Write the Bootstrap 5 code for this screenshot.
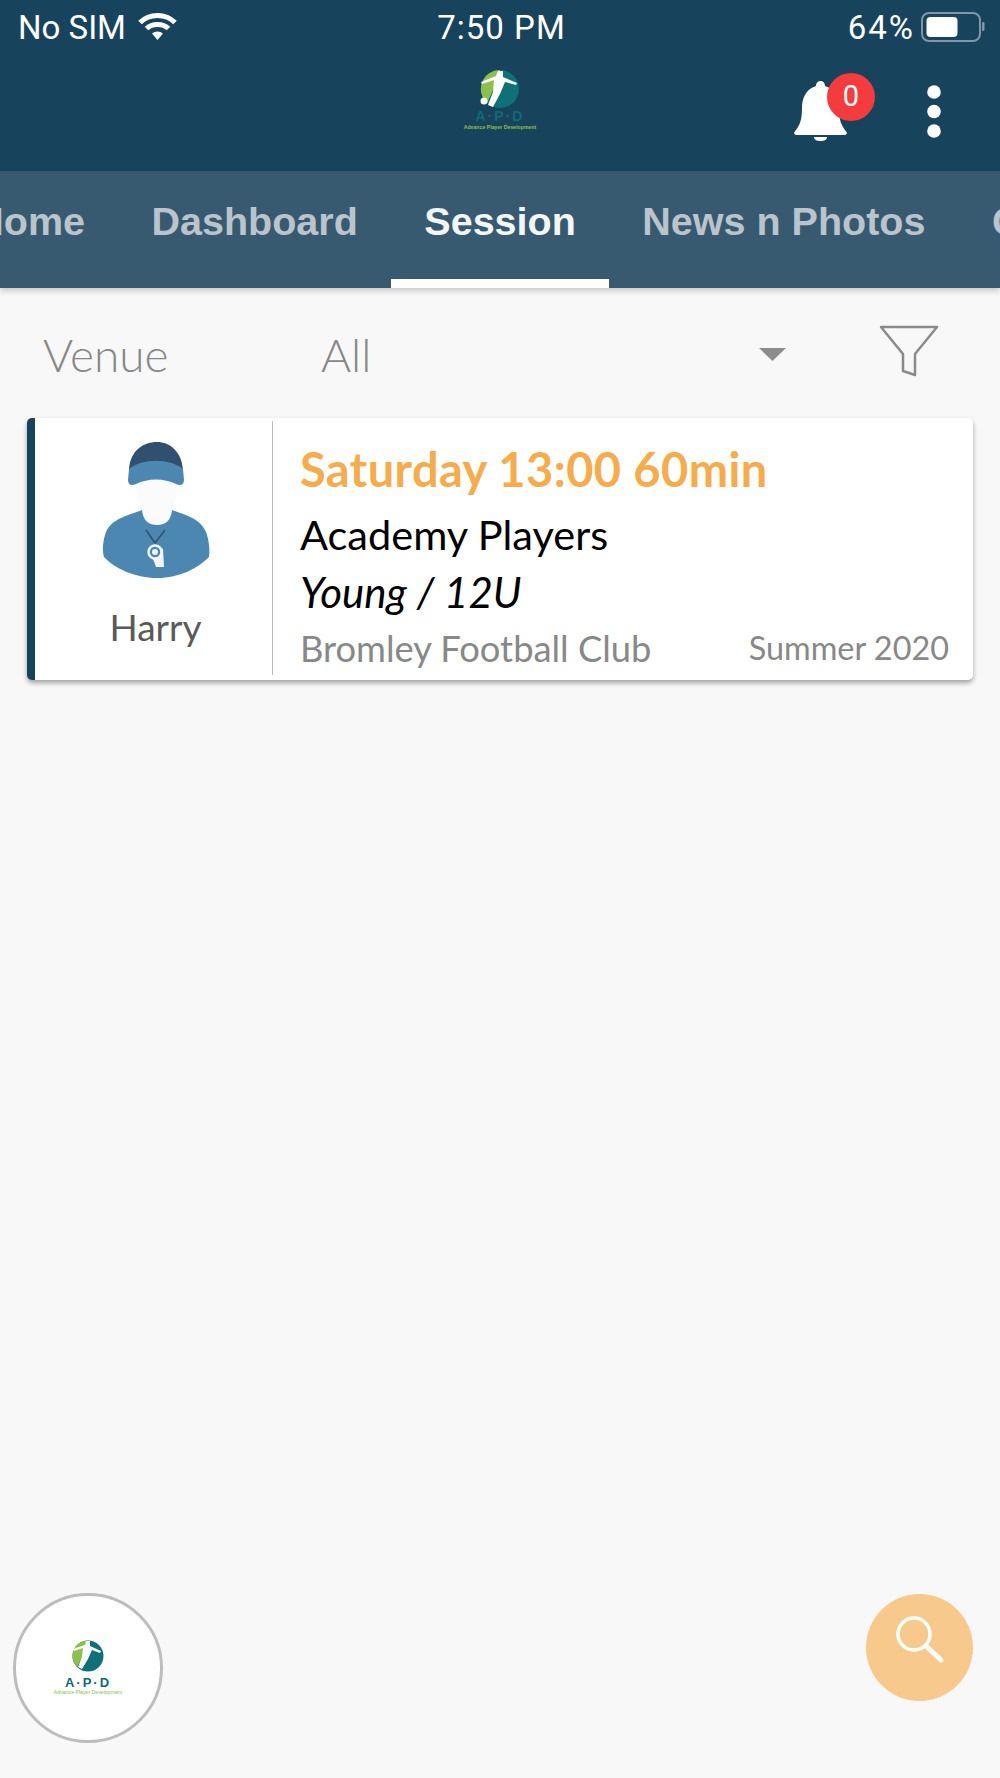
<!DOCTYPE html>
<html lang="en">
<head>
  <meta charset="UTF-8">
  <meta name="viewport" content="width=device-width, initial-scale=1.0">
  <title>Session</title>
  <link href="https://cdn.jsdelivr.net/npm/bootstrap@5.3.3/dist/css/bootstrap.min.css" rel="stylesheet">
  <style>
    body { background: #f8f8f8; width: 1000px; height: 1778px; overflow: hidden; font-family: Lato, "Liberation Sans", sans-serif; }
    .top-head { background: #18435c; height: 171px; color: #fff; }
    .status-line { height: 54px; padding: 1px 15px 0 18px; font: 33px/54px Roboto, "Liberation Sans", sans-serif; }
    .status-side { width: 300px; }
    .status-clock { letter-spacing: 1px; }
    .status-pct { letter-spacing: 2px; }
    .wifi-ico { width: 41px; height: 28px; margin: 0 0 4px 11px; }
    .batt-ico { width: 64px; height: 30px; margin-left: 6px; margin-bottom: 2px; }
    .brand-line { height: 116px; }
    .brand-side { flex: 1 1 0; }
    .brand-logo { width: 80px; height: 76px; margin-top: 16px; }
    .bell-wrap { width: 53px; height: 61px; margin: 26px 0 0 0; }
    .bell-count { position: absolute; left: 33px; top: -7px; width: 48px; height: 48px; border-radius: 50%; background: #f43b3e; font: 29px/46px Roboto, sans-serif; text-align: center; color: #fff; }
    .more-ico { width: 14px; height: 53px; margin: 31px 59px 0 80px; }
    .tab-strip { background: #375a70; height: 117px; overflow: hidden; box-shadow: 0 3px 6px rgba(0,0,0,.2); position: relative; }
    .tab-track { margin-left: -58px; white-space: nowrap; }
    .tab-item { height: 117px; padding: 0 33.25px; font: bold 39.5px/100px "Liberation Sans", Arial, sans-serif; color: #b9c4cc; border-bottom: 9px solid transparent; flex: none; }
    .tab-item.on { color: #f3f6f8; border-bottom-color: #fff; }
    .venue-row { height: 130px; padding: 3px 61px 0 43px; color: #878787; font-size: 46px; font-weight: 300; }
    .venue-name { width: 278px; }
    .venue-arrow { width: 27px; height: 13px; margin-right: 93px; }
    .funnel-ico { width: 60px; height: 52px; margin-bottom: 8px; }
    .sess-card { margin: 0 27px; height: 262px; background: #fff; border-left: 8px solid #18435c; border-radius: 5px; box-shadow: 0 3px 5px rgba(0,0,0,.35); }
    .coach-box { width: 238px; border-right: 1px solid #bcbcbc; margin: 3px 0 5px; }
    .coach-pic { width: 160px; height: 160px; display: block; margin: 9px 0 0 45px; }
    .coach-name { font-size: 37px; line-height: 44px; color: #5a5a5a; margin-top: 15px; padding-left: 4px; }
    .sess-body { padding: 0 24px 0 27px; }
    .sess-time { color: #f5ac4d; font-size: 47px; font-weight: 700; letter-spacing: .4px; line-height: 50px; margin-top: 26px; }
    .sess-group { color: #000; font-size: 41.5px; line-height: 50px; margin-top: 15px; }
    .sess-age { color: #000; font-size: 42px; line-height: 50px; font-style: italic; margin-top: 8px; }
    .sess-foot { color: #888; font-size: 36.3px; line-height: 40px; margin-top: 11px; }
    .sess-term { font-size: 32.4px; margin-top: -1px; }
    .round-logo { position: absolute; left: 13px; top: 1593px; width: 150px; height: 150px; border-radius: 50%; background: #fff; border: 3px solid #bdbdbd; }
    .round-logo svg { width: 144px; height: 144px; display: block; }
    .round-search { position: absolute; left: 866px; top: 1594px; width: 107px; height: 107px; border-radius: 50%; background: #f8c98c; }
    .round-search svg { width: 107px; height: 107px; display: block; }
  </style>
</head>
<body class="position-relative">
  <div class="top-head">
    <div class="status-line d-flex justify-content-between align-items-center">
      <div class="status-side d-flex align-items-center">
        <span>No SIM</span>
        <svg class="wifi-ico" viewBox="0 0 39 28"><g fill="none" stroke="#fff" stroke-width="5"><path d="M2 10.500C11.500 1 27.500 1 37 10.500"/><path d="M8.500 16.500C14 11 25 11 30.500 16.500"/></g><path d="M14 21.500C17 18.800 22 18.800 25 21.500L19.500 28Z" fill="#fff"/></svg>
      </div>
      <span class="status-clock">7:50 PM</span>
      <div class="status-side d-flex align-items-center justify-content-end">
        <span class="status-pct">64%</span>
        <svg class="batt-ico" viewBox="0 0 64 30"><rect x="1" y="1" width="58" height="28" rx="7" fill="none" stroke="#7f98a8" stroke-width="2"/><rect x="5.500" y="5" width="31" height="20" rx="4" fill="#fff"/><rect x="61" y="10" width="2.500" height="9" rx="1" fill="#7f98a8"/></svg>
      </div>
    </div>
    <div class="brand-line d-flex">
      <div class="brand-side"></div>
      <svg class="brand-logo" viewBox="0 0 80 76">
        <circle cx="40" cy="19" r="19" fill="#0f7078"/>
        <path d="M40 0A19 19 0 0 0 27 33L36 14L40 0Z" fill="#8cbf4b"/>
        <path d="M38 1L43 1L43 7L57 13L56 15L45 12L40 24L33 37L28 35L33 22L34 10L22 14L21 12L36 6Z" fill="#fff"/>
        <circle cx="24" cy="31" r="3.500" fill="#fff"/>
        <text x="40" y="51" text-anchor="middle" font-family="Liberation Sans" font-weight="bold" font-size="14" letter-spacing="2" fill="#0e6a75">A·P·D</text>
        <text x="40" y="58.500" text-anchor="middle" font-family="Liberation Sans" font-weight="bold" font-size="5.200" fill="#8cbf4b">Advance Player Development</text>
      </svg>
      <div class="brand-side d-flex justify-content-end">
        <div class="bell-wrap position-relative">
          <svg viewBox="0 0 53 61" width="53" height="61"><path d="M26.500 1C23.500 1 22 3.500 22 6C12 9 8 18 8 28C8 40 6 45 .5 52C-.5 54 1 55 3 55H50C52 55 53.500 54 52.500 52C47 45 45 40 45 28C45 18 41 9 31 6C31 3.500 29.500 1 26.500 1Z" fill="#fff"/><path d="M20 57H33C33 60 30 61 26.500 61C23 61 20 60 20 57Z" fill="#fff"/></svg>
          <span class="bell-count">0</span>
        </div>
        <svg class="more-ico" viewBox="0 0 14 53"><circle cx="7" cy="7" r="6.800" fill="#fff"/><circle cx="7" cy="26.500" r="6.800" fill="#fff"/><circle cx="7" cy="46" r="6.800" fill="#fff"/></svg>
      </div>
    </div>
  </div>

  <div class="tab-strip">
    <div class="tab-track d-flex">
      <div class="tab-item">Home</div>
      <div class="tab-item">Dashboard</div>
      <div class="tab-item on">Session</div>
      <div class="tab-item">News n Photos</div>
      <div class="tab-item">Coaches</div>
    </div>
  </div>

  <div class="venue-row d-flex align-items-center">
    <div class="venue-name">Venue</div>
    <div class="flex-grow-1">All</div>
    <svg class="venue-arrow" viewBox="0 0 27 13"><path d="M0 0H27L13.500 13Z" fill="#8c8c8c"/></svg>
    <svg class="funnel-ico" viewBox="0 0 60 52"><path d="M2 2H58L36 29V50L24 46V29Z" fill="none" stroke="#8a8a8a" stroke-width="2.500" stroke-linejoin="round"/></svg>
  </div>

  <div class="sess-card d-flex">
    <div class="coach-box flex-shrink-0 text-center">
      <svg class="coach-pic" viewBox="0 0 160 160">
        <path d="M56 52C66 48 86 48 98 52L96 66C94 74 93 75 92 80C91 90 86 95 77 95C68 95 63 90 62 80C61 75 58 72 57 66Z" fill="#fbfbfb"/>
        <path d="M49 40C50 20 64 12 77 12C90 12 102 22 103 40C90 30 62 30 49 40Z" fill="#31506f"/>
        <path d="M49 39C62 28 90 28 103 39L104 50C104 55 100 56 96 54C84 48 68 48 56 54C52 56 48 55 48 50Z" fill="#4b87b0"/>
        <path d="M62 80C63 90 68 95 77 95C86 95 91 90 92 80C105 85 120 88 126 102C129 110 130 120 129 127C118 138 100 148 77 148C55 148 34 138 24 127C22 120 23 110 26 102C32 88 50 85 62 80Z" fill="#4b87b0"/>
        <path d="M66 100L75 113L85 100" fill="none" stroke="#31506f" stroke-width="1.500"/>
        <path d="M78 115L83 119L84 137H76L73 129Z" fill="#f3f6f8"/>
        <circle cx="75" cy="122" r="6.500" fill="#4b87b0" stroke="#f3f6f8" stroke-width="2.500"/>
        <circle cx="75" cy="122" r="3" fill="#f3f6f8"/>
      </svg>
      <div class="coach-name">Harry</div>
    </div>
    <div class="sess-body flex-grow-1">
      <div class="sess-time">Saturday 13:00 60min</div>
      <div class="sess-group">Academy Players</div>
      <div class="sess-age">Young / 12U</div>
      <div class="sess-foot d-flex justify-content-between align-items-center">
        <span>Bromley Football Club</span>
        <span class="sess-term">Summer 2020</span>
      </div>
    </div>
  </div>

  <div class="round-logo">
    <svg viewBox="0 0 144 144">
      <circle cx="72" cy="60" r="15.500" fill="#0f7078"/>
      <path d="M72 44.500A15.500 15.500 0 0 0 61 71L70 55Z" fill="#8cbf4b"/>
      <path d="M70 45L74 45L74 50L85 55L84 57L76 54L72 63L66 73L62 71L66 61L67 52L58 55L57 53L69 49Z" fill="#fff"/>
      <text x="72" y="91" text-anchor="middle" font-family="Liberation Sans" font-weight="bold" font-size="13" letter-spacing="2" fill="#0e6a75">A·P·D</text>
      <text x="72" y="98" text-anchor="middle" font-family="Liberation Sans" font-size="5.200" fill="#8cbf4b">Advance Player Development</text>
    </svg>
  </div>
  <div class="round-search">
    <svg viewBox="0 0 107 107"><circle cx="48" cy="40" r="16" fill="none" stroke="#fff" stroke-width="3.500"/><path d="M60 52L75 66" stroke="#fff" stroke-width="5" stroke-linecap="round"/></svg>
  </div>

  <script src="https://cdn.jsdelivr.net/npm/bootstrap@5.3.3/dist/js/bootstrap.bundle.min.js"></script>
</body>
</html>
